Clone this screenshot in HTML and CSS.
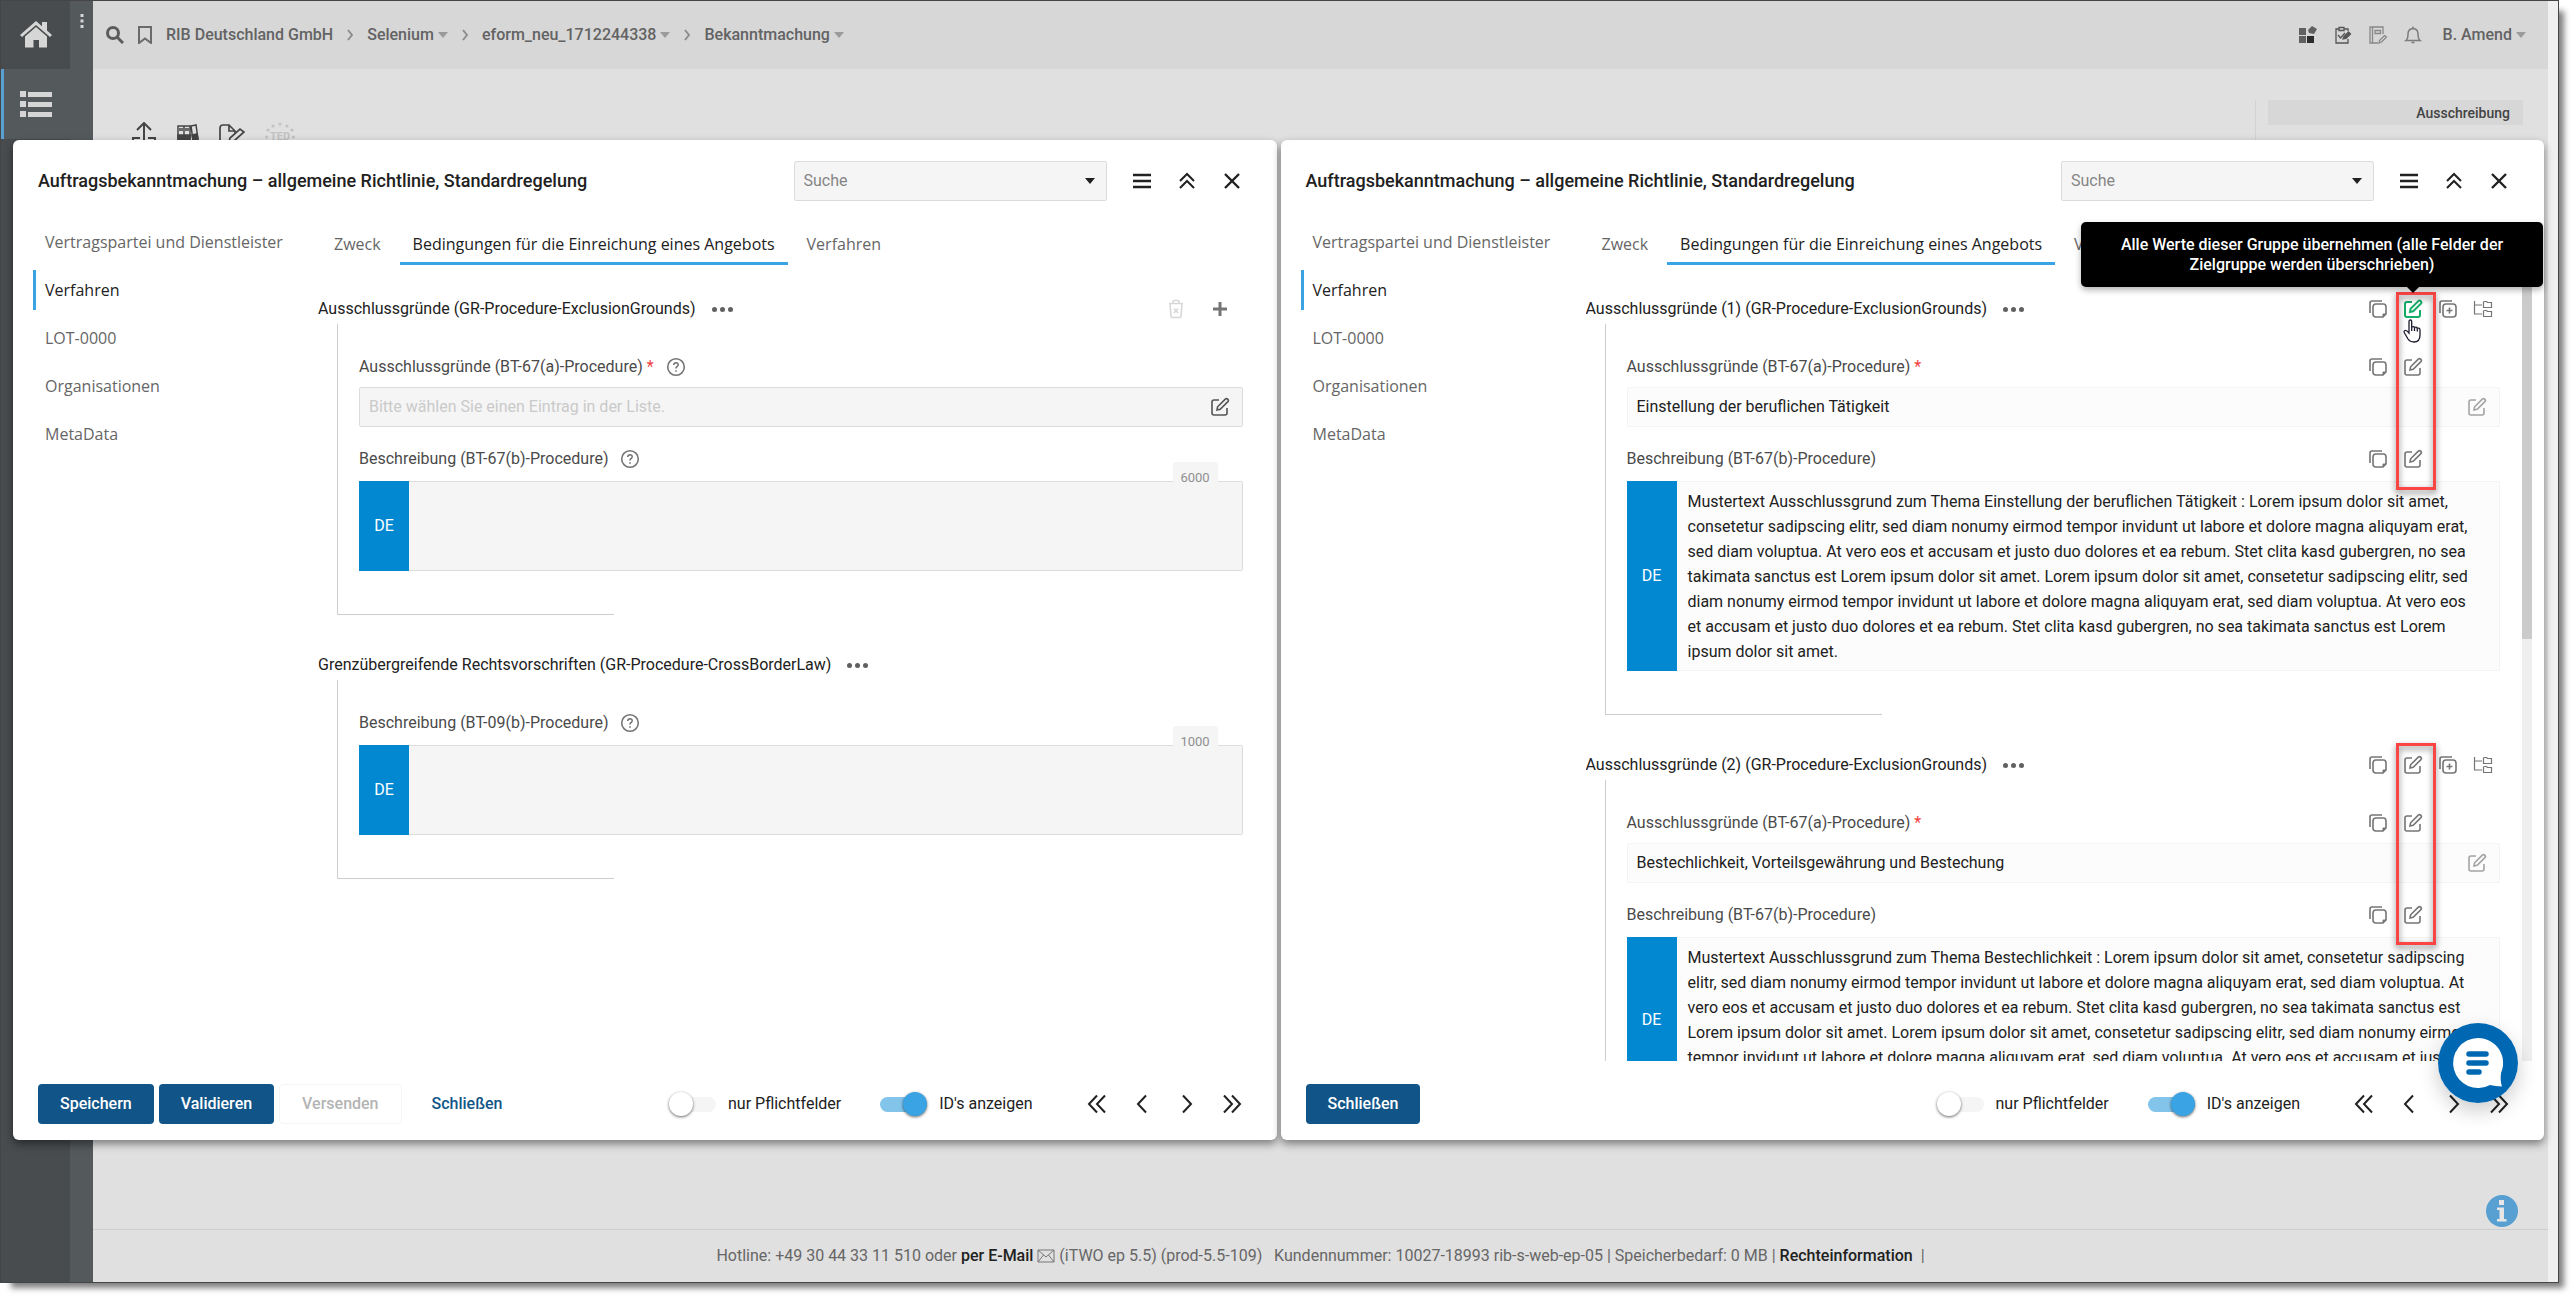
FILE: index.html
```html
<!DOCTYPE html>
<html lang="de">
<head>
<meta charset="utf-8">
<title>Bekanntmachung</title>
<link rel="stylesheet" href="styles.css">
</head>
<body>
<svg class="sprite" aria-hidden="true">
  <symbol id="i-edit" viewBox="0 0 20 20"><path d="M9 3H4Q2 3 2 5V16Q2 18 4 18H15Q17 18 17 16V11" /><path d="M7 13L7.600 9.800L15.300 2.100Q16.500 1 17.700 2.100Q19 3.400 17.900 4.600L10.200 12.300Z"/></symbol>
  <symbol id="i-copy" viewBox="0 0 20 20"><path d="M2 14V4Q2 2 4 2H14"/><path d="M18 15V8Q18 5 15.500 5H8Q5 5 5 8V15Q5 18 8 18H15Z"/><path class="fold" d="M18 15H15V18Z"/></symbol>
  <symbol id="i-copyplus" viewBox="0 0 20 20"><path d="M2 14V4Q2 2 4 2H14"/><rect x="5" y="5" width="13" height="13" rx="3"/><path d="M11.500 8.500V14.500M8.500 11.500H14.500"/></symbol>
  <symbol id="i-tree" viewBox="0 0 20 20"><path d="M1.500 2V15H9M1.500 6H9"/><path d="M10.500 3.500Q10.500 2.500 11.500 2.500H13.500L14.500 3.500H18.500V8.500H10.500ZM10.500 12.500Q10.500 11.500 11.500 11.500H13.500L14.500 12.500H18.500V17.500H10.500Z"/></symbol>
  <symbol id="i-trash" viewBox="0 0 20 20"><path d="M3 4.500H17M7 4V2.500Q7 1.500 8 1.500H12Q13 1.500 13 2.500V4M4 4.500L5 17.500Q5 18.500 6 18.500H14Q15 18.500 15 17.500L16 4.500M8 9.500L12 14M12 9.500L8 14"/></symbol>
  <symbol id="i-plus" viewBox="0 0 20 20"><path d="M10 3V17M3 10H17"/></symbol>
  <symbol id="i-help" viewBox="0 0 20 20"><circle cx="10" cy="10" r="8.300"/><path d="M7.700 8Q7.900 5.700 10 5.700Q12.300 5.800 12.200 7.700Q12.100 9 10.800 9.700Q10 10.200 10 11.500M10 13.200V14.800"/></symbol>
  <symbol id="i-menu" viewBox="0 0 20 20"><path d="M1 4H19M1 10H19M1 16H19"/></symbol>
  <symbol id="i-up2" viewBox="0 0 20 20"><path d="M3 10L10 3L17 10M3 17L10 10L17 17"/></symbol>
  <symbol id="i-x" viewBox="0 0 20 20"><path d="M3 3L17 17M17 3L3 17"/></symbol>
  <symbol id="i-first" viewBox="0 0 20 20"><path d="M10 1.500L2 10L10 18.500M18 1.500L10 10L18 18.500"/></symbol>
  <symbol id="i-prev" viewBox="0 0 20 20"><path d="M14 1.500L6 10L14 18.500"/></symbol>
  <symbol id="i-next" viewBox="0 0 20 20"><path d="M6 1.500L14 10L6 18.500"/></symbol>
  <symbol id="i-last" viewBox="0 0 20 20"><path d="M2 1.500L10 10L2 18.500M10 1.500L18 10L10 18.500"/></symbol>
  <symbol id="i-caret" viewBox="0 0 10 6"><path d="M0 0H10L5 6Z"/></symbol>
</svg>

<div class="window">
  <aside class="sidebar">
    <div class="sidebar-main">
      <a class="side-item side-home" href="#" aria-label="Startseite"><svg viewBox="0 0 32 28" width="32" height="28"><path d="M0 14L16 0L22 5.300V1H27V9.600L32 14L30 16L16 4L2 16Z"/><path d="M5 15.500L16 6L27 15.500V26.500H19V19H13.500V26.500H5Z"/></svg></a>
      <a class="side-item side-list" href="#" aria-label="Liste"><svg viewBox="0 0 32 28" width="32" height="28"><path d="M0 1H6V7H0ZM8 2H32V7H8ZM0 11H6V17H0ZM8 12H32V17H8ZM0 21H6V27H0ZM8 22H32V27H8Z"/></svg></a>
    </div>
    <div class="sidebar-rail"><svg viewBox="0 0 4 14" width="4" height="14"><path d="M0.500 0H3.500V3H0.500ZM0.500 5.500H3.500V8.500H0.500ZM0.500 11H3.500V14H0.500Z"/></svg></div>
  </aside>
  <div class="page">
    <header class="topbar">
      <svg class="top-search" viewBox="0 0 18 18" width="18" height="18"><circle cx="7" cy="7" r="5.500"/><path d="M11 11L17 17"/></svg>
      <svg class="top-mark" viewBox="0 0 14 18" width="14" height="18"><path d="M1 1H13V17L7 12.500L1 17Z"/></svg>
      <nav class="crumbs">
        <a href="#">RIB Deutschland GmbH</a><svg class="sep" viewBox="0 0 6 12"><path d="M1 1L5 6L1 11"/></svg>
        <a href="#">Selenium <svg class="caret"><use href="#i-caret"/></svg></a><svg class="sep" viewBox="0 0 6 12"><path d="M1 1L5 6L1 11"/></svg>
        <a href="#">eform_neu_1712244338 <svg class="caret"><use href="#i-caret"/></svg></a><svg class="sep" viewBox="0 0 6 12"><path d="M1 1L5 6L1 11"/></svg>
        <a href="#">Bekanntmachung <svg class="caret"><use href="#i-caret"/></svg></a>
      </nav>
      <div class="top-right">
        <svg viewBox="0 0 18 18" width="18" height="18"><path fill="#606060" d="M0 2H7V9H0ZM0 10H7V17H0ZM9 4L13 0L18 3L15 8L10 7Z"/><path fill="#2c2c2c" d="M8 10H15V17H8Z"/></svg>
        <svg viewBox="0 0 18 18" width="18" height="18" fill="none" stroke="#555" stroke-width="1.300"><path d="M5 3H2V17H14V13M10 3H14V5M5 1.500H10V4.500H5ZM4 9L6.500 12L11 7"/><path fill="#555" d="M9 13L10 10.500L14.500 6L16.500 8L12 12.500Z"/></svg>
        <svg viewBox="0 0 18 18" width="18" height="18" fill="none" stroke="#888" stroke-width="1.300"><path d="M9 17H1V1H14V8M3.500 1V17M6 4.500H11.500V7.500H6Z"/><path d="M10 17L10.500 14.500L15.500 9.500L17.500 11L12.500 16Z"/></svg>
        <svg viewBox="0 0 18 18" width="18" height="18" fill="none" stroke="#7c7c7c" stroke-width="1.500"><path d="M2 14.500Q4 13 4 8Q4 3 9 2.500Q14 3 14 8Q14 13 16 14.500ZM9 0.500V2.500M7.500 16.500H10.500"/></svg>
        <a class="user" href="#">B. Amend <svg class="caret"><use href="#i-caret"/></svg></a>
      </div>
    </header>
    <main class="backdrop">
      <div class="tools">
        <svg viewBox="0 0 26 26" width="26" height="26" fill="none" stroke="#444" stroke-width="2"><path d="M13 1V18M6 8L13 1L20 8M9 16H2V25H24V16H17"/></svg>
        <svg viewBox="0 0 22 26" width="22" height="26" fill="none" stroke="#444" stroke-width="1.500"><path d="M1 4H7V24H1ZM7 4H13V24H7ZM14 4L19 3L22 24L17 25ZM3 6V9M5 6V9M9 6V9M11 6V9"/><path fill="#444" d="M1 13H7V18H1ZM8 13H13V18H8ZM15 13L20 12L21 17L16 18Z"/></svg>
        <svg viewBox="0 0 26 26" width="26" height="26" fill="none" stroke="#444" stroke-width="1.700"><path d="M7 21H1V6Q1 3 4 3H10L16 9V11M10 3V9H16M10 20L11 16L21 7L25 10L15 19Z"/></svg>
        <svg class="ted" viewBox="0 0 30 30" width="30" height="30"><g class="stars"><circle cx="15" cy="2" r="1.600"/><circle cx="8" cy="4" r="1.600"/><circle cx="22" cy="4" r="1.600"/><circle cx="3" cy="8" r="1.600"/><circle cx="27" cy="8" r="1.600"/><circle cx="1.600" cy="15" r="1.600"/><circle cx="28.400" cy="15" r="1.600"/></g><text x="15" y="18" text-anchor="middle">TED</text></svg>
      </div>
      <section class="facts"><h2>Ausschreibung</h2></section>
      <button class="info" type="button" aria-label="Information"><svg viewBox="0 0 32 32" width="32" height="32"><circle cx="16" cy="16" r="16"/><path fill="#e6e6e6" d="M13 5H18V10H13ZM11 12.500H18V24H20.500V26.500H11V24H13.500V15H11Z"/></svg></button>
    </main>
    <footer class="pagefoot">
      <p>Hotline: +49 30 44 33 11 510 oder <a href="#">per E-Mail</a> <svg viewBox="0 0 18 14" width="18" height="14"><path d="M1 1H17V13H1ZM1 1L9 8L17 1M1 13L6.500 6M17 13L11.500 6"/></svg> (iTWO ep 5.5) (prod-5.5-109) &nbsp; Kundennummer: 10027-18993 rib-s-web-ep-05 | Speicherbedarf: 0 MB | <a href="#">Rechteinformation</a> &nbsp;|</p>
    </footer>
  </div>
  <div class="page-scroll"></div>

  <div class="overlay">
    <section class="panel">
      <header class="panel-head">
        <h1>Auftragsbekanntmachung – allgemeine Richtlinie, Standardregelung</h1>
        <div class="search"><input type="text" placeholder="Suche" aria-label="Suche"><button type="button" aria-label="Liste öffnen"><svg class="caret"><use href="#i-caret"/></svg></button></div>
        <button class="ic strong" type="button" aria-label="Menü"><svg><use href="#i-menu"/></svg></button>
        <button class="ic strong thin" type="button" aria-label="Einklappen"><svg><use href="#i-up2"/></svg></button>
        <button class="ic strong" type="button" aria-label="Fenster schließen"><svg><use href="#i-x"/></svg></button>
      </header>
      <div class="panel-body">
        <nav class="sections">
          <a href="#">Vertragspartei und Dienstleister</a>
          <a href="#" class="active">Verfahren</a>
          <a href="#">LOT-0000</a>
          <a href="#">Organisationen</a>
          <a href="#">MetaData</a>
        </nav>
        <div class="content">
          <nav class="tabs"><a href="#">Zweck</a><a href="#" class="active">Bedingungen für die Einreichung eines Angebots</a><a href="#">Verfahren</a></nav>
          <div class="scroller">
            <div class="groups">
              <section class="group">
                <header class="group-head">
                  <h2>Ausschlussgründe (GR-Procedure-ExclusionGrounds)</h2>
                  <button class="dots" type="button" aria-label="Mehr"><i></i><i></i><i></i></button>
                  <div class="actions wide"><button class="ic faint" type="button" aria-label="Löschen"><svg><use href="#i-trash"/></svg></button><button class="ic bold" type="button" aria-label="Hinzufügen"><svg><use href="#i-plus"/></svg></button></div>
                </header>
                <div class="fields">
                  <div class="label-row"><label for="a1">Ausschlussgründe (BT-67(a)-Procedure) <em>*</em></label><button class="ic help" type="button" aria-label="Hilfe"><svg><use href="#i-help"/></svg></button></div>
                  <div class="pick"><input id="a1" type="text" placeholder="Bitte wählen Sie einen Eintrag in der Liste."><button class="ic dark" type="button" aria-label="Auswählen"><svg><use href="#i-edit"/></svg></button></div>
                  <div class="label-row"><label for="a2">Beschreibung (BT-67(b)-Procedure)</label><button class="ic help" type="button" aria-label="Hilfe"><svg><use href="#i-help"/></svg></button></div>
                  <div class="multi"><span class="lang">DE</span><textarea id="a2" rows="3"></textarea><span class="count">6000</span></div>
                </div>
              </section>
              <section class="group">
                <header class="group-head">
                  <h2>Grenzübergreifende Rechtsvorschriften (GR-Procedure-CrossBorderLaw)</h2>
                  <button class="dots" type="button" aria-label="Mehr"><i></i><i></i><i></i></button>
                </header>
                <div class="fields">
                  <div class="label-row"><label for="a3">Beschreibung (BT-09(b)-Procedure)</label><button class="ic help" type="button" aria-label="Hilfe"><svg><use href="#i-help"/></svg></button></div>
                  <div class="multi"><span class="lang">DE</span><textarea id="a3" rows="3"></textarea><span class="count">1000</span></div>
                </div>
              </section>
            </div>
          </div>
        </div>
      </div>
      <footer class="panel-foot">
        <button class="btn" type="button">Speichern</button><button class="btn" type="button">Validieren</button><button class="btn off" type="button" disabled>Versenden</button><button class="btn link" type="button">Schließen</button>
        <div class="foot-right">
          <label class="toggle must"><input type="checkbox">nur Pflichtfelder</label>
          <label class="toggle"><input type="checkbox" checked>ID's anzeigen</label>
          <div class="pager">
            <button class="ic strong thin" type="button" aria-label="Erste"><svg><use href="#i-first"/></svg></button><button class="ic strong thin" type="button" aria-label="Zurück"><svg><use href="#i-prev"/></svg></button><button class="ic strong thin" type="button" aria-label="Weiter"><svg><use href="#i-next"/></svg></button><button class="ic strong thin" type="button" aria-label="Letzte"><svg><use href="#i-last"/></svg></button>
          </div>
        </div>
      </footer>
    </section>

    <section class="panel readonly">
      <header class="panel-head">
        <h1>Auftragsbekanntmachung – allgemeine Richtlinie, Standardregelung</h1>
        <div class="search"><input type="text" placeholder="Suche" aria-label="Suche"><button type="button" aria-label="Liste öffnen"><svg class="caret"><use href="#i-caret"/></svg></button></div>
        <button class="ic strong" type="button" aria-label="Menü"><svg><use href="#i-menu"/></svg></button>
        <button class="ic strong thin" type="button" aria-label="Einklappen"><svg><use href="#i-up2"/></svg></button>
        <button class="ic strong" type="button" aria-label="Fenster schließen"><svg><use href="#i-x"/></svg></button>
      </header>
      <div class="panel-body">
        <nav class="sections">
          <a href="#">Vertragspartei und Dienstleister</a>
          <a href="#" class="active">Verfahren</a>
          <a href="#">LOT-0000</a>
          <a href="#">Organisationen</a>
          <a href="#">MetaData</a>
        </nav>
        <div class="content">
          <nav class="tabs"><a href="#">Zweck</a><a href="#" class="active">Bedingungen für die Einreichung eines Angebots</a><a href="#">Verfahren</a></nav>
          <div class="scroller">
            <div class="groups">
              <section class="group">
                <header class="group-head">
                  <h2>Ausschlussgründe (1) (GR-Procedure-ExclusionGrounds)</h2>
                  <button class="dots" type="button" aria-label="Mehr"><i></i><i></i><i></i></button>
                  <div class="actions"><button class="ic" type="button" aria-label="Kopieren"><svg><use href="#i-copy"/></svg></button><button class="ic hot" type="button" aria-label="Alle Werte übernehmen"><svg><use href="#i-edit"/></svg></button><button class="ic" type="button" aria-label="Als neue Gruppe kopieren"><svg><use href="#i-copyplus"/></svg></button><button class="ic hair" type="button" aria-label="Struktur"><svg><use href="#i-tree"/></svg></button></div>
                </header>
                <div class="fields">
                  <div class="label-row"><label for="b1">Ausschlussgründe (BT-67(a)-Procedure) <em>*</em></label><div class="actions"><button class="ic" type="button" aria-label="Kopieren"><svg><use href="#i-copy"/></svg></button><button class="ic" type="button" aria-label="Übernehmen"><svg><use href="#i-edit"/></svg></button></div></div>
                  <div class="pick"><input id="b1" type="text" value="Einstellung der beruflichen Tätigkeit" readonly><button class="ic pale" type="button" aria-label="Auswählen"><svg><use href="#i-edit"/></svg></button></div>
                  <div class="label-row"><label for="b2">Beschreibung (BT-67(b)-Procedure)</label><div class="actions"><button class="ic" type="button" aria-label="Kopieren"><svg><use href="#i-copy"/></svg></button><button class="ic" type="button" aria-label="Übernehmen"><svg><use href="#i-edit"/></svg></button></div></div>
                  <div class="multi"><span class="lang">DE</span><textarea id="b2" rows="7" readonly>Mustertext Ausschlussgrund zum Thema Einstellung der beruflichen Tätigkeit : Lorem ipsum dolor sit amet, consetetur sadipscing elitr, sed diam nonumy eirmod tempor invidunt ut labore et dolore magna aliquyam erat, sed diam voluptua. At vero eos et accusam et justo duo dolores et ea rebum. Stet clita kasd gubergren, no sea takimata sanctus est Lorem ipsum dolor sit amet. Lorem ipsum dolor sit amet, consetetur sadipscing elitr, sed diam nonumy eirmod tempor invidunt ut labore et dolore magna aliquyam erat, sed diam voluptua. At vero eos et accusam et justo duo dolores et ea rebum. Stet clita kasd gubergren, no sea takimata sanctus est Lorem ipsum dolor sit amet.</textarea></div>
                </div>
                <div class="frame"></div>
              </section>
              <section class="group">
                <header class="group-head">
                  <h2>Ausschlussgründe (2) (GR-Procedure-ExclusionGrounds)</h2>
                  <button class="dots" type="button" aria-label="Mehr"><i></i><i></i><i></i></button>
                  <div class="actions"><button class="ic" type="button" aria-label="Kopieren"><svg><use href="#i-copy"/></svg></button><button class="ic" type="button" aria-label="Alle Werte übernehmen"><svg><use href="#i-edit"/></svg></button><button class="ic" type="button" aria-label="Als neue Gruppe kopieren"><svg><use href="#i-copyplus"/></svg></button><button class="ic hair" type="button" aria-label="Struktur"><svg><use href="#i-tree"/></svg></button></div>
                </header>
                <div class="fields">
                  <div class="label-row"><label for="b3">Ausschlussgründe (BT-67(a)-Procedure) <em>*</em></label><div class="actions"><button class="ic" type="button" aria-label="Kopieren"><svg><use href="#i-copy"/></svg></button><button class="ic" type="button" aria-label="Übernehmen"><svg><use href="#i-edit"/></svg></button></div></div>
                  <div class="pick"><input id="b3" type="text" value="Bestechlichkeit, Vorteilsgewährung und Bestechung" readonly><button class="ic pale" type="button" aria-label="Auswählen"><svg><use href="#i-edit"/></svg></button></div>
                  <div class="label-row"><label for="b4">Beschreibung (BT-67(b)-Procedure)</label><div class="actions"><button class="ic" type="button" aria-label="Kopieren"><svg><use href="#i-copy"/></svg></button><button class="ic" type="button" aria-label="Übernehmen"><svg><use href="#i-edit"/></svg></button></div></div>
                  <div class="multi"><span class="lang">DE</span><textarea id="b4" rows="6" readonly>Mustertext Ausschlussgrund zum Thema Bestechlichkeit : Lorem ipsum dolor sit amet, consetetur sadipscing elitr, sed diam nonumy eirmod tempor invidunt ut labore et dolore magna aliquyam erat, sed diam voluptua. At vero eos et accusam et justo duo dolores et ea rebum. Stet clita kasd gubergren, no sea takimata sanctus est Lorem ipsum dolor sit amet. Lorem ipsum dolor sit amet, consetetur sadipscing elitr, sed diam nonumy eirmod tempor invidunt ut labore et dolore magna aliquyam erat, sed diam voluptua. At vero eos et accusam et justo duo dolores et ea rebum.</textarea></div>
                </div>
                <div class="frame tall"></div>
              </section>
            </div>
            <div class="bar"><div class="thumb"></div></div>
          </div>
        </div>
      </div>
      <footer class="panel-foot">
        <button class="btn" type="button">Schließen</button>
        <div class="foot-right">
          <label class="toggle must"><input type="checkbox">nur Pflichtfelder</label>
          <label class="toggle"><input type="checkbox" checked>ID's anzeigen</label>
          <div class="pager">
            <button class="ic strong thin" type="button" aria-label="Erste"><svg><use href="#i-first"/></svg></button><button class="ic strong thin" type="button" aria-label="Zurück"><svg><use href="#i-prev"/></svg></button><button class="ic strong thin" type="button" aria-label="Weiter"><svg><use href="#i-next"/></svg></button><button class="ic strong thin" type="button" aria-label="Letzte"><svg><use href="#i-last"/></svg></button>
          </div>
        </div>
      </footer>
      <div class="tip" role="tooltip">Alle Werte dieser Gruppe übernehmen (alle Felder der Zielgruppe werden überschrieben)</div>
      <svg class="hand" viewBox="0 0 18 24" width="18" height="24"><path d="M6 14V2.500Q6 1 7.300 1Q8.700 1 8.700 2.500V8Q11 7 11.500 8.500Q13.500 7.500 14.300 9.200Q17 8.500 17 11V16Q17 23 11 23Q7 23 5 20L1.500 14Q0.500 12 2 11.500Q3.500 11 6 14Z"/><path d="M8.700 8V12M11.500 8.500V12M14.300 9.200V12.500"/></svg>
    </section>
  </div>
  <button class="chat" type="button" aria-label="Chat"><svg viewBox="0 0 80 80" width="80" height="80"><circle cx="40" cy="40" r="40" fill="#0068b2"/><path fill="#fff" d="M40 15A25 25 0 1 0 52 62Q57 63 64 63.500Q62 58 63 50A25 25 0 0 0 40 15Z"/><path d="M31 31H48M31 40H48M31 49H41" fill="none" stroke="#0068b2" stroke-width="5.500" stroke-linecap="round"/></svg></button>
</div>
</body>
</html>
```
FILE: styles.css
```css
* { box-sizing: border-box; }
html, body { height: 100%; }
body {
  margin: 0;
  padding: 0 15px 15px 0;
  background: #fff;
  font: 16px/20px Roboto, "Liberation Sans", sans-serif;
  color: #212121;
}
a { color: inherit; text-decoration: none; }
h1, h2, p { margin: 0; }
button { border: 0; background: none; padding: 0; font: inherit; color: inherit; }
svg { display: block; flex: none; }
.sprite { position: absolute; width: 0; height: 0; }

/* Application frame */
.window {
  position: relative;
  display: flex;
  height: 100%;
  border: 1px solid #454545;
  box-shadow: 8px 8px 6px -3px rgba(0, 0, 0, .5);
}
.sidebar { display: flex; flex: none; background: #484c4e; }
.sidebar-main { width: 69px; }
.sidebar-rail { width: 23px; background: #54595c; display: flex; justify-content: center; padding-top: 13px; }
.sidebar svg { fill: #d6d6d6; }
.side-item { display: flex; align-items: center; justify-content: center; height: 68px; }
.side-list { height: 70px; background: #54595c; border-left: 3px solid #58a0d2; padding-right: 3px; }
.page { flex: 1; min-width: 0; display: flex; flex-direction: column; background: #e0e0e0; }
.page-scroll { width: 10px; background: #f0f0f0; }

.topbar { display: flex; align-items: center; height: 68px; padding: 0 22px 0 13px; background: #d7d7d7; color: #636363; font-weight: 500; }
.top-search { fill: none; stroke: #5c5c5c; stroke-width: 3; }
.top-mark { fill: none; stroke: #6a6a6a; stroke-width: 2; margin: 0 14px; }
.crumbs { display: flex; align-items: center; gap: 14px; }
.crumbs a, .user { display: flex; align-items: center; gap: 4px; }
.sep { width: 6px; height: 12px; fill: none; stroke: #8c8c8c; stroke-width: 2; }
.caret { width: 10px; height: 6px; fill: #9a9a9a; }
.top-right { display: flex; align-items: center; gap: 17px; margin-left: auto; }
.user { margin-left: 4px; }

.backdrop { flex: 1; position: relative; display: flex; justify-content: space-between; }
.tools { display: flex; gap: 20px; padding: 53px 0 0 38px; }
.ted { fill: #c2c2c2; font-weight: 700; font-size: 11px; }
.facts { width: 293px; height: 110px; margin-top: 31px; padding: 0 25px 0 12px; border-left: 1px solid #d2d2d2; }
.facts h2 { height: 25px; padding-right: 13px; background: #d7d7d7; color: #444; font-size: 14px; line-height: 26px; font-weight: 500; text-align: right; }
.info { position: absolute; right: 30px; bottom: 2px; }
.info svg { fill: #58a0d2; }
.pagefoot { height: 53px; padding-top: 16px; border-top: 1px solid #cdcdcd; color: #666; text-align: center; }
.pagefoot a { color: #212121; font-weight: 500; }
.pagefoot svg { display: inline-block; vertical-align: -2px; fill: none; stroke: #777; stroke-width: 1; }

/* Dialogs */
.overlay {
  position: absolute;
  inset: 139px 14px 142px 12px;
  display: grid;
  grid-template-columns: 1fr 1fr;
  gap: 4px;
}
.panel { position: relative; display: flex; flex-direction: column; min-width: 0; min-height: 0; background: #fff; border-radius: 6px; box-shadow: 0 4px 8px rgba(0, 0, 0, .45); }
.panel-head { display: flex; align-items: center; gap: 25px; height: 82px; padding: 0 35px 0 25px; }
.panel-head h1 { flex: 1; font-size: 18px; font-weight: 500; line-height: 22px; white-space: nowrap; }
.search { display: flex; align-items: center; width: 313px; height: 40px; padding: 0 11px 0 9px; background: #f5f5f5; border: 1px solid #dcdcdc; border-radius: 2px; }
.search input { flex: 1; min-width: 0; border: 0; background: none; padding: 0; font: inherit; outline: 0; }
.search input::placeholder { color: #858585; opacity: 1; }
.search .caret { fill: #212121; }
.ic { width: 20px; height: 20px; flex: none; }
.ic svg { width: 20px; height: 20px; fill: none; stroke: #757575; stroke-width: 1.6; }
.ic.strong svg { stroke: #212121; stroke-width: 2.4; }
.ic.thin svg { stroke-width: 2; }
.ic.bold svg { stroke-width: 3; }
.ic.dark svg { stroke: #555; }
.ic.faint svg { stroke: #d8d8d8; }
.ic.pale svg { stroke: #a3a3a3; }
.ic.hair svg { stroke-width: 1.2; }
.ic.hot svg { stroke: #14ad67; stroke-width: 2; }
.fold { fill: #757575; stroke-width: 1; }

.panel-body { flex: 1; display: flex; min-height: 0; }
.sections { flex: none; width: 305px; padding: 0 20px; display: flex; flex-direction: column; gap: 8px; }
.sections a, .tabs a { font-family: "Open Sans", "Noto Sans", sans-serif; font-size: 16px; color: #666; }
.sections a { height: 40px; line-height: 40px; padding-left: 9px; border-left: 3px solid transparent; white-space: nowrap; }
.sections a.active { color: #212121; border-color: #39a3e4; }
.content { flex: 1; min-width: 0; display: flex; flex-direction: column; }
.tabs { display: flex; gap: 6px; padding: 5px 0 0 3px; }
.tabs a { padding: 0 13px; line-height: 35px; border-bottom: 3px solid transparent; white-space: nowrap; }
.tabs a.active { color: #212121; border-color: #39a3e4; }
.scroller { flex: 1; min-height: 0; display: flex; overflow: hidden; padding-right: 34px; }
.readonly .scroller { padding-right: 12px; gap: 22px; }
.groups { flex: 1; min-width: 0; padding-top: 29px; }
.bar { width: 10px; background: #efefef; }
.thumb { height: 47%; background: #cbcbcb; }

.group { position: relative; margin-bottom: 35px; }
.group-head { display: flex; align-items: center; height: 30px; }
.group-head h2 { font-size: 16px; font-weight: 400; }
.dots { display: flex; gap: 3px; margin-left: 16px; }
.dots i { width: 5px; height: 5px; border-radius: 50%; background: #606060; }
.actions { display: flex; gap: 15px; margin-left: auto; padding-right: 7px; }
.actions.wide { gap: 24px; padding-right: 13px; }
.label-row .actions { padding-right: 77px; }
.fields {
  margin-left: 19px;
  padding: 31px 0 44px 21px;
  border-left: 1px solid #cdcdcd;
  background: linear-gradient(#cdcdcd, #cdcdcd) 0 100% / 276px 1px no-repeat;
}
.label-row { display: flex; align-items: center; gap: 12px; height: 24px; color: #4a4a4a; }
.label-row label { line-height: 22px; }
.label-row em { color: #f03c3c; font-style: normal; }
.pick { display: flex; align-items: center; height: 40px; margin: 8px 0 20px; padding: 0 12px 0 9px; background: #f5f5f5; border: 1px solid #dcdcdc; border-radius: 2px; }
.pick input { flex: 1; min-width: 0; padding: 0; border: 0; background: none; font: inherit; color: #212121; outline: 0; }
.pick input::placeholder { color: #cacaca; opacity: 1; }
.multi { position: relative; display: flex; margin-top: 10px; }
.lang { display: flex; align-items: center; justify-content: center; flex: none; width: 50px; background: #0288d1; color: #fff; }
.multi textarea { flex: 1; min-width: 0; padding: 7px 20px 6px 11px; border: 1px solid #dcdcdc; border-left: 0; border-radius: 0 2px 2px 0; background: #f5f5f5; color: #212121; font: 16px/25px Roboto, "Liberation Sans", sans-serif; resize: none; overflow: hidden; outline: 0; }
.count { position: absolute; top: -19px; right: 25px; width: 45px; height: 21px; padding-top: 6px; border-radius: 3px 3px 0 0; background: #f5f5f5; color: #8f8f8f; font-size: 13px; line-height: 20px; text-align: center; }
.readonly .pick, .readonly .multi textarea { background: #fcfcfc; border-color: #f4f4f4; }
.frame { position: absolute; top: -2px; right: 64px; width: 40px; height: 198px; border: 3px solid #fb4545; filter: drop-shadow(0 3px 3px rgba(0, 0, 0, .5)); pointer-events: none; }
.frame.tall { top: -7px; height: 202px; }

.panel-foot { display: flex; align-items: center; gap: 5px; height: 79px; padding: 7px 35px 0 25px; }
.btn { height: 40px; padding: 0 22px; border-radius: 4px; background: #115588; color: #fff; font-weight: 500; }
.btn.off { background: #fff; border: 1px solid #f5f5f5; color: #b4b4b4; }
.btn.link { background: none; color: #115588; margin-left: 3px; }
.foot-right { display: flex; align-items: center; margin-left: auto; }
.toggle { display: flex; align-items: center; gap: 12px; }
.toggle.must { margin-right: 39px; }
.toggle input { appearance: none; display: flex; align-items: center; margin: 0; width: 47px; height: 15px; border-radius: 8px; background: #f5f5f5; }
.toggle input::before { content: ""; width: 24px; height: 24px; border-radius: 50%; background: #fff; box-shadow: 0 1px 3px rgba(0, 0, 0, .6); }
.toggle input:checked { justify-content: flex-end; background: #83c4ea; }
.toggle input:checked::before { background: #39a3e4; }
.pager { display: flex; gap: 25px; margin-left: 54px; }

.tip { position: absolute; top: 82px; right: 1px; width: 462px; padding: 13px 30px 12px; border-radius: 5px; background: #000; color: #fff; font-weight: 500; text-align: center; box-shadow: 0 3px 6px rgba(0, 0, 0, .3); }
.tip::after { content: ""; position: absolute; top: 100%; right: 124px; border: 6px solid transparent; border-top-color: #000; border-bottom: 0; }
.hand { position: absolute; top: 179px; right: 123px; fill: #fff; stroke: #1a1a2c; stroke-width: 1.3; }
.chat { position: absolute; right: 40px; bottom: 179px; border-radius: 50%; box-shadow: 0 8px 20px rgba(0, 0, 0, .2); }
```
